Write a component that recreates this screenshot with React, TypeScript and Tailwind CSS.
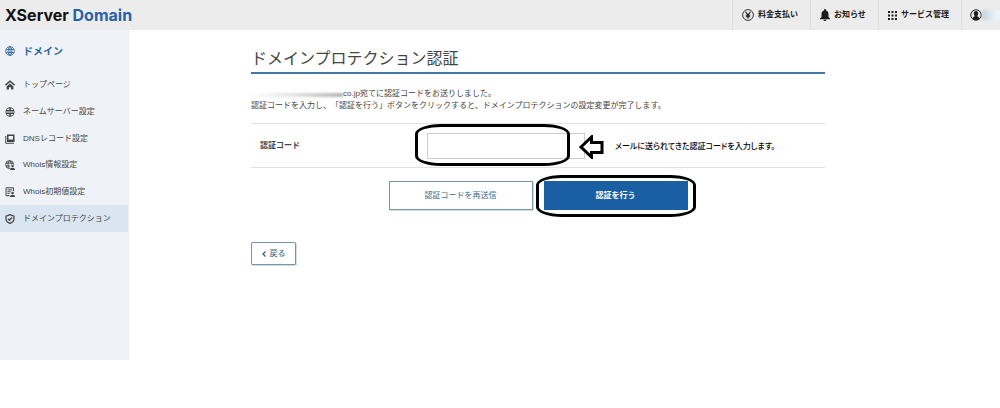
import type { ReactNode } from 'react';

const GlobeIcon = ({ className }: { className?: string }) => (
  <svg viewBox="0 0 24 24" fill="none" stroke="currentColor" strokeWidth="2" className={className}>
    <circle cx="12" cy="12" r="10.5" />
    <ellipse cx="12" cy="12" rx="4.5" ry="10.5" />
    <path d="M2.5 8.5h19M2.5 15.5h19M12 2v20" />
  </svg>
);

const HomeIcon = () => (
  <svg viewBox="0 0 24 24" className="size-2.5" fill="none" stroke="currentColor" strokeWidth="3.5">
    <path d="M1 12.5 12 3l11 9.5" />
    <path d="M4 15.5 12 8.5l8 7V23h-5.5v-5.5h-5V23H4z" fill="currentColor" stroke="none" />
  </svg>
);

const ServerIcon = () => (
  <svg viewBox="0 0 20 20" className="size-2.5" fill="none" stroke="currentColor" strokeWidth="2">
    <path d="M2 7a8.5 8.5 0 0 1 16 0zM2 13a8.5 8.5 0 0 0 16 0z" />
    <path d="M0 10h20" />
    <path d="M10 1v6M10 13v6" strokeWidth="3" />
  </svg>
);

const RecordIcon = () => (
  <svg viewBox="0 0 20 20" className="size-2.5" fill="none" stroke="currentColor" strokeWidth="3">
    <path d="M5.5 2.5h12v12h-12z" />
    <path d="M1.500 4v14.500H18" strokeWidth="2" />
    <path d="M5 11h13v4H5z" fill="currentColor" stroke="none" />
  </svg>
);

const WhoisIcon = () => (
  <svg viewBox="0 0 24 24" className="size-2.5" fill="none" stroke="currentColor" strokeWidth="2.4">
    <path d="M20.5 11A9.5 9.5 0 1 0 11 20.5" />
    <path d="M11 1.500c-5 5-5 14 0 19M11 1.500c2.5 2.5 3.8 5.500 4 9M2.500 7.500h17M2.500 14.500h10" />
    <circle cx="18" cy="14.5" r="3" fill="currentColor" stroke="none" />
    <path d="M12 24c0-3.5 2-5.500 6-5.500s6 2 6 5.500z" fill="currentColor" stroke="none" />
  </svg>
);

const DefaultsIcon = () => (
  <svg viewBox="0 0 24 24" className="size-2.5" fill="none" stroke="currentColor" strokeWidth="2.4">
    <path d="M20.5 10V2h-18v19H11" />
    <path d="M6 7h11M6 11.5h8M6 16h5" />
    <circle cx="18" cy="14.5" r="3" fill="currentColor" stroke="none" />
    <path d="M12 24c0-3.5 2-5.500 6-5.500s6 2 6 5.500z" fill="currentColor" stroke="none" />
  </svg>
);

const ShieldIcon = () => (
  <svg viewBox="0 0 24 24" className="size-2.5" fill="none" stroke="currentColor" strokeWidth="3">
    <path d="M12 1.500 21.500 5v7c0 5-4 8.500-9.500 10.500C6.500 20.500 2.500 17 2.500 12V5z" />
    <path d="m7.5 11.5 3.5 3.5 6-6.5" />
  </svg>
);

const YenIcon = () => (
  <svg viewBox="0 0 24 24" className="size-3" fill="none" stroke="currentColor" strokeWidth="1.8">
    <circle cx="12" cy="12" r="10.8" />
    <path d="M7 5.5 12 12l5-6.5M12 12v7M7.5 12.5h9M7.500 15.500h9" strokeWidth="2.4" />
  </svg>
);

const BellIcon = () => (
  <svg viewBox="0 0 20 24" className="h-3 w-2.5" fill="currentColor">
    <path d="M10 0a2 2 0 0 0-2 2v.8C4.5 3.800 3 6.500 3 10v6l-3 3v1.500h20V19l-3-3v-6c0-3.500-1.500-6.200-5-7.200V2a2 2 0 0 0-2-2zM7 21.500h6a3 2.500 0 0 1-6 0z" />
  </svg>
);

const GridIcon = () => (
  <svg viewBox="0 0 9 9" className="size-[9px]" fill="currentColor">
    {[0, 3.5, 7].map((y) =>
      [0, 3.5, 7].map((x) => <rect key={`${x}-${y}`} x={x} y={y} width="2" height="2" />)
    )}
  </svg>
);

const AccountIcon = () => (
  <svg viewBox="0 0 24 24" className="size-3 shrink-0" fill="none" stroke="currentColor" strokeWidth="2">
    <circle cx="12" cy="12" r="10.5" />
    <path d="M12 4a4.500 5 0 0 0-3 8.800c.5 1.700 0 2.700-1.500 3.200-1.500.5-2.500 1.500-2.500 3 3.500 4 10.500 4 14 0 0-1.500-1-2.500-2.500-3-1.500-.5-2-1.500-1.500-3.200A4.500 5 0 0 0 12 4z" fill="currentColor" stroke="none" />
  </svg>
);

const ArrowMark = () => (
  <svg viewBox="0 0 25 24" className="h-6 w-[25px]" fill="#fff" stroke="#000" strokeWidth="3">
    <path d="M2 12 12.5 2v5.500H23v10H12.500V22z" />
  </svg>
);

const menu = [
  { icon: <HomeIcon />, label: 'トップページ' },
  { icon: <ServerIcon />, label: 'ネームサーバー設定' },
  { icon: <RecordIcon />, label: 'DNSレコード設定' },
  { icon: <WhoisIcon />, label: 'Whois情報設定' },
  { icon: <DefaultsIcon />, label: 'Whois初期値設定' },
  { icon: <ShieldIcon />, label: 'ドメインプロテクション', active: true },
];

const HeaderLink = ({ className, children }: { className: string; children: ReactNode }) => (
  <a href="#" className={`flex items-center gap-1 border-l border-[#dcdcdc] pl-[9px] ${className}`}>
    {children}
  </a>
);

const Header = () => (
  <header className="flex h-[30px] justify-between bg-[#ececec]">
    <a href="#" className="flex items-center pl-[5px] font-['Inter'] text-base font-bold text-[#111]">
      <span>
        XServer <span className="text-[#2762a6]">Domain</span>
      </span>
    </a>
    <nav className="flex text-[8px] font-bold whitespace-nowrap text-[#1c1c1c]">
      <HeaderLink className="w-[78px]">
        <YenIcon />
        料金支払い
      </HeaderLink>
      <HeaderLink className="w-[68px]">
        <BellIcon />
        お知らせ
      </HeaderLink>
      <HeaderLink className="w-[83px]">
        <GridIcon />
        サービス管理
      </HeaderLink>
      <a href="#" aria-label="アカウント" className="flex w-[39px] items-center overflow-hidden border-l border-[#dcdcdc] pl-2">
        <AccountIcon />
        <span className="h-2.5 flex-1 bg-linear-to-r from-[#c8d0d6] via-[#dcebf6] to-[#f4f6f8] blur-[1px]" />
      </a>
    </nav>
  </header>
);

const Sidebar = () => (
  <aside className="w-[129px] shrink-0 border-r border-[#ebeef2] bg-[#eff3f7] pb-32">
    <h2 className="flex h-[42px] items-center gap-2 pl-[5px] text-[10px] font-bold text-[#2b669f]">
      <GlobeIcon className="size-2.5" />
      ドメイン
    </h2>
    <ul className="grid h-40 grid-rows-6 text-[8px] text-[#444]">
      {menu.map((item) => (
        <li key={item.label} className={item.active ? 'bg-[#d9e6f2]' : ''}>
          <a href="#" className="flex h-full items-center gap-2 pl-[5px] whitespace-nowrap">
            {item.icon}
            {item.label}
          </a>
        </li>
      ))}
    </ul>
  </aside>
);

export default function App() {
  return (
    <div className="min-h-screen bg-white font-['Liberation_Sans','Noto_Sans_CJK_JP',sans-serif] text-[#444]">
      <Header />
      <div className="flex">
        <Sidebar />
        <main className="flex-1 pt-[17px] pr-[175px] pl-[122px]">
          <h1 className="border-b-2 border-[#4377a6] pb-px text-base leading-6">ドメインプロテクション認証</h1>

          <div className="mt-[14px] text-[8px] leading-3 [text-spacing-trim:space-all]">
            <p className="flex items-center">
              <span className="mt-0.5 h-1 w-[92px] bg-linear-to-r from-white via-[#e2e2e2] to-[#b4b4b4] blur-[1px]" />
              co.jp宛てに認証コードをお送りしました。
            </p>
            <p>認証コードを入力し、「認証を行う」ボタンをクリックすると、ドメインプロテクションの設定変更が完了します。</p>
          </div>

          <form>
            <div className="mt-[11px] flex h-[45px] items-center border-y border-[#dfe2e4] pl-[9px]">
              <label htmlFor="code" className="w-[167px] text-[8px] font-bold">
                認証コード
              </label>
              <div className="relative">
                <input
                  id="code"
                  type="text"
                  className="block h-[26px] w-[158px] border border-[#c9cfd4] bg-white px-2 text-[8px] outline-none"
                />
                <span className="pointer-events-none absolute -top-[9px] -left-3 h-[42px] w-[155px] rounded-[26px/10px] border-3 border-black" />
                <p className="absolute top-0.5 left-[152px] flex w-max items-center gap-[11px] text-[8px] font-medium text-black [font-feature-settings:'palt']">
                  <ArrowMark />
                  メールに送られてきた認証コードを入力します。
                </p>
              </div>
            </div>

            <div className="mt-[13px] flex justify-center gap-[11px] text-[8px]">
              <button
                type="button"
                className="h-[29px] w-36 border border-[#7797a8] bg-white text-[#3c6a85] shadow-[1px_1px_0_#d3dde3]"
              >
                認証コードを再送信
              </button>
              <div className="relative">
                <button type="submit" className="block h-[29px] w-36 bg-[#1a5fa4] font-bold text-white">
                  認証を行う
                </button>
                <span className="pointer-events-none absolute -inset-x-2 -top-1.5 h-[42px] rounded-[26px/10px] border-3 border-black" />
              </div>
            </div>
          </form>

          <button
            type="button"
            className="mt-8 flex h-[23px] w-[45px] items-center justify-center gap-1 rounded-[1px] border border-[#7797a8] text-[8px] text-[#2f5a75] shadow-[1px_1px_0_#d3dde3]"
          >
            <svg viewBox="0 0 4 6" className="h-1.5 w-1" fill="none" stroke="currentColor" strokeWidth="1.2">
              <path d="M3.5.5 1 3l2.500 2.500" />
            </svg>
            戻る
          </button>
        </main>
      </div>
    </div>
  );
}
